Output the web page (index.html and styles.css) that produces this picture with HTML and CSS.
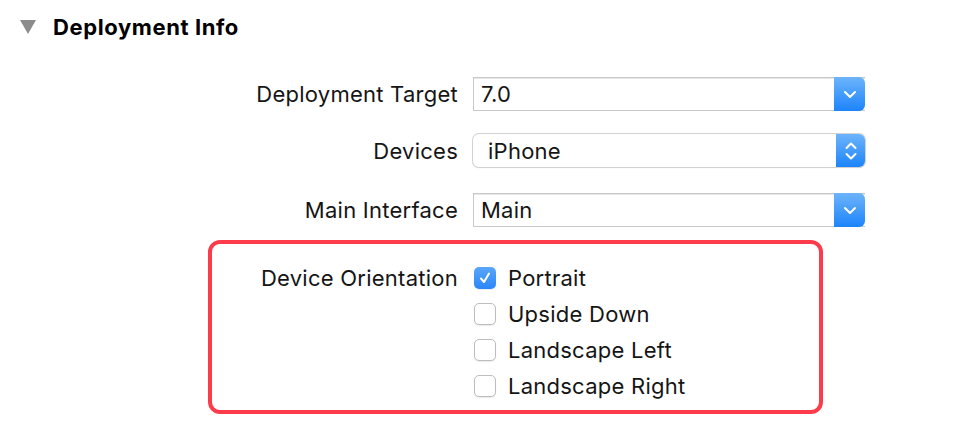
FILE: index.html
```html
<!DOCTYPE html>
<html lang="en">
<head>
<meta charset="utf-8">
<title>Deployment Info</title>
<link rel="stylesheet" href="styles.css">
</head>
<body>
<section class="panel">
  <header class="section-head">
    <svg class="disclosure" width="16" height="14" viewBox="0 0 16 14"><path d="M0 0 H16 L8 14 Z" fill="#8c8c8c"/></svg>
    <h1 class="section-title">Deployment Info</h1>
  </header>

  <div class="row row-target">
    <span class="label">Deployment Target</span>
    <div class="combo">
      <span class="combo-value">7.0</span>
      <span class="combo-btn">
        <svg width="14" height="9" viewBox="0 0 14 9"><path d="M2 2 L7 7 L12 2" fill="none" stroke="#fff" stroke-width="2" stroke-linecap="round" stroke-linejoin="round"/></svg>
      </span>
    </div>
  </div>

  <div class="row row-devices">
    <span class="label">Devices</span>
    <div class="popup">
      <span class="popup-value">iPhone</span>
      <span class="popup-btn">
        <svg width="14" height="22" viewBox="0 0 14 22"><path d="M2.5 8 L7 3.5 L11.5 8 M2.5 14 L7 18.5 L11.5 14" fill="none" stroke="#fff" stroke-width="2" stroke-linecap="round" stroke-linejoin="round"/></svg>
      </span>
    </div>
  </div>

  <div class="row row-main">
    <span class="label">Main Interface</span>
    <div class="combo">
      <span class="combo-value">Main</span>
      <span class="combo-btn">
        <svg width="14" height="9" viewBox="0 0 14 9"><path d="M2 2 L7 7 L12 2" fill="none" stroke="#fff" stroke-width="2" stroke-linecap="round" stroke-linejoin="round"/></svg>
      </span>
    </div>
  </div>

  <div class="highlight">
    <span class="label orient-label">Device Orientation</span>
    <ul class="checks">
      <li class="check-row">
        <span class="box checked">
          <svg width="14" height="14" viewBox="0 0 14 14"><path d="M3 7.5 L6 11 L11 2.5" fill="none" stroke="#fff" stroke-width="2" stroke-linecap="round" stroke-linejoin="round"/></svg>
        </span>
        <span class="check-text">Portrait</span>
      </li>
      <li class="check-row"><span class="box"></span><span class="check-text">Upside Down</span></li>
      <li class="check-row"><span class="box"></span><span class="check-text">Landscape Left</span></li>
      <li class="check-row"><span class="box"></span><span class="check-text">Landscape Right</span></li>
    </ul>
  </div>
</section>
</body>
</html>
```

FILE: styles.css
```css
html, body {
  margin: 0;
  padding: 0;
  background: #ffffff;
}

body {
  font-family: Inter, "Liberation Sans", sans-serif;
  color: #151515;
  font-size: 22px;
  letter-spacing: 0.25px;
}

.panel {
  width: 971px;
  height: 422px;
}

.section-head {
  display: flex;
  align-items: center;
  gap: 17px;
  padding: 11px 0 0 20px;
  height: 32px;
}

.disclosure {
  display: block;
}

.section-title {
  margin: 0;
  font-size: 22px;
  font-weight: 700;
  color: #000;
  letter-spacing: 0.6px;
}

.row {
  display: flex;
  align-items: center;
  gap: 15px;
}

.label {
  width: 458px;
  text-align: right;
  white-space: nowrap;
}

.row-target { margin-top: 34px; }
.row-devices { margin-top: 23px; }
.row-main { margin-top: 26px; }

.combo {
  width: 392px;
  height: 34px;
  box-sizing: border-box;
  display: flex;
  align-items: stretch;
  border: 1px solid #c9c9c9;
  border-right: none;
  box-shadow: inset 0 1px 0 #e6e6e6;
  background: #fff;
}

.combo-value {
  flex: 1;
  display: flex;
  align-items: center;
  padding-left: 7px;
}

.combo-btn {
  width: 31px;
  margin: -1px 0;
  border-radius: 0 6px 6px 0;
  background: linear-gradient(#6db4fb, #1c84fb);
  display: flex;
  align-items: center;
  justify-content: center;
}

.popup {
  width: 392px;
  height: 33px;
  box-sizing: border-box;
  display: flex;
  align-items: stretch;
  border-radius: 6px;
  background: #fff;
  box-shadow: 0 0 0 1px #d2d2d2, 0 1px 1px rgba(0,0,0,0.18);
}

.popup-value {
  flex: 1;
  display: flex;
  align-items: center;
  padding-left: 15px;
}

.popup-btn {
  width: 29px;
  border-radius: 0 6px 6px 0;
  background: linear-gradient(#6db4fb, #1c84fb);
  display: flex;
  align-items: center;
  justify-content: center;
}

.highlight {
  margin: 13px 0 0 208px;
  width: 615px;
  box-sizing: border-box;
  border: 4px solid #fc3b4b;
  border-radius: 12px;
  padding: 16px 0 6px 0;
  display: flex;
  align-items: flex-start;
  gap: 16px;
}

.orient-label {
  width: 246px;
  line-height: 36px;
}

.checks {
  list-style: none;
  margin: 0;
  padding: 0;
}

.check-row {
  height: 36px;
  display: flex;
  align-items: center;
  gap: 12px;
}

.box {
  width: 22px;
  height: 22px;
  box-sizing: border-box;
  border-radius: 5px;
  border: 1px solid #bdbdbd;
  background: #fff;
  box-shadow: 0 1px 1px rgba(0,0,0,0.08);
  display: flex;
  align-items: center;
  justify-content: center;
}

.box.checked {
  border: none;
  background: linear-gradient(#5aa6fa, #2b86f7);
}
```
